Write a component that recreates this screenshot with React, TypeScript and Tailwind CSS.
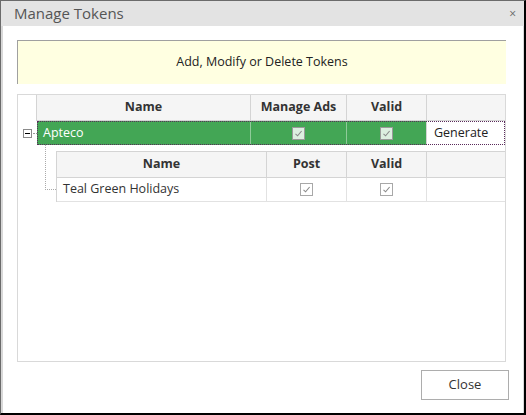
import React from "react";

const font = { fontFamily: '"Open Sans", "Noto Sans", "Liberation Sans", sans-serif' };

function Check({ onGreen }: { onGreen?: boolean }) {
  return (
    <span
      className={
        onGreen
          ? "inline-flex h-[13px] w-[13px] items-center justify-center border border-[#9a9a9a] bg-[#dcefe0]"
          : "inline-flex h-[13px] w-[13px] items-center justify-center border border-[#a8a8a8] bg-transparent"
      }
    >
      <svg width="9" height="9" viewBox="0 0 9 9">
        <path d="M1.5 4.8 L3.6 6.8 L7.6 2" fill="none" stroke="#8a8a8a" strokeWidth="1.1" />
      </svg>
    </span>
  );
}

export default function App() {
  return (
    <div
      className="w-[526px] h-[415px] flex flex-col bg-white border-l border-t border-[#6b6b6b] border-r-2 border-b-2 border-r-black border-b-black"
      style={font}
    >
      <div className="h-[25px] bg-[#e3e3e3] flex items-center justify-between pl-[13px] pr-[8px] shrink-0">
        <span className="text-[15px] text-[#555] leading-none">Manage Tokens</span>
        <span className="text-[12px] text-[#666] leading-none">×</span>
      </div>
      <div className="flex-1 flex flex-col border-l-2 border-r border-[#d8d8d8] pl-[14px] pr-[17px] pt-[14px]">
        <div className="h-[44px] bg-[#ffffe1] border-t border-l border-[#a0a0a0] flex items-center justify-center text-[12.5px] text-[#222]">
          Add, Modify or Delete Tokens
        </div>
        <div className="mt-[10px] h-[268px] border border-[#d9d9d9] flex flex-col">
          <div className="grid grid-cols-[19px_214px_96px_80px_1fr] h-[26px] text-[12.5px] font-bold text-[#333]">
            <div className="border-r border-[#d4d4d4]" />
            <div className="bg-[#f5f5f5] border-r border-b border-[#d4d4d4] flex items-center justify-center">Name</div>
            <div className="bg-[#f5f5f5] border-r border-b border-[#d4d4d4] flex items-center justify-center">Manage Ads</div>
            <div className="bg-[#f5f5f5] border-r border-b border-[#d4d4d4] flex items-center justify-center">Valid</div>
            <div className="bg-[#f5f5f5] border-b border-[#d4d4d4]" />
          </div>
          <div className="grid grid-cols-[19px_1fr] h-[24px]">
            <div className="relative flex items-center">
              <span className="ml-[5px] h-[9px] w-[9px] border border-[#8a8a8a] bg-white flex items-center justify-center">
                <span className="h-[1px] w-[5px] bg-black" />
              </span>
              <span className="ml-[1px] w-[4px] border-t border-dotted border-[#999]" />
            </div>
            <div className="relative grid grid-cols-[214px_96px_80px_1fr] text-[12.5px] outline-1 outline-dotted outline-[#5a2a5a] -outline-offset-1">
              <div className="bg-[#43a655] text-white flex items-center pl-[6px] border-r border-[#8fcb99]">Apteco</div>
              <div className="bg-[#43a655] flex items-center justify-center border-r border-[#8fcb99]"><Check onGreen /></div>
              <div className="bg-[#43a655] flex items-center justify-center border-r border-[#d4d4d4]"><Check onGreen /></div>
              <div className="bg-white flex items-center pl-[7px] text-[#222]">Generate</div>
            </div>
          </div>
          <div className="relative flex pt-[6px] pl-[38px]">
            <div className="absolute left-[27px] top-0 h-[45px] w-[11px] border-l border-b border-dotted border-[#aaa]" />
            <div className="flex-1 border-t border-l border-[#d4d4d4]">
              <div className="grid grid-cols-[210px_80px_80px_1fr] h-[26px] text-[12.5px] font-bold text-[#333] bg-[#f5f5f5]">
                <div className="border-r border-b border-[#d4d4d4] flex items-center justify-center">Name</div>
                <div className="border-r border-b border-[#d4d4d4] flex items-center justify-center">Post</div>
                <div className="border-r border-b border-[#d4d4d4] flex items-center justify-center">Valid</div>
                <div className="border-b border-[#d4d4d4]" />
              </div>
              <div className="grid grid-cols-[210px_80px_80px_1fr] h-[24px] text-[12.5px] text-[#333]">
                <div className="border-r border-b border-[#e2e2e2] flex items-center pl-[6px]">Teal Green Holidays</div>
                <div className="border-r border-b border-[#e2e2e2] flex items-center justify-center"><Check /></div>
                <div className="border-r border-b border-[#e2e2e2] flex items-center justify-center"><Check /></div>
                <div className="border-b border-[#e2e2e2]" />
              </div>
            </div>
          </div>
        </div>
        <div className="flex justify-end mt-[8px] -mr-[3px]">
          <button className="w-[88px] h-[30px] border border-[#adadad] bg-white text-[13px] text-[#333]">Close</button>
        </div>
      </div>
    </div>
  );
}
